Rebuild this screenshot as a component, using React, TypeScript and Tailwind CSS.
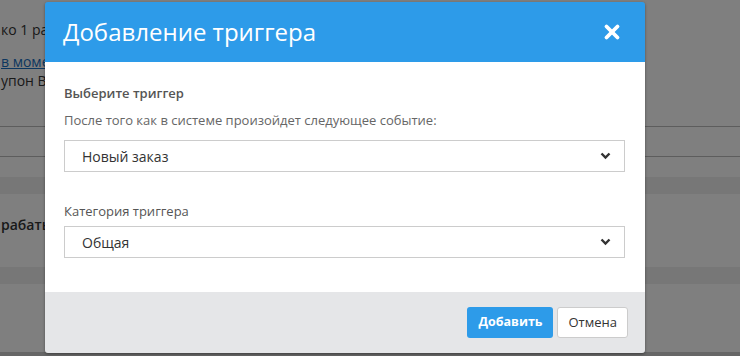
import { X } from 'lucide-react'

function Chevron() {
  return (
    <svg width="11" height="8" viewBox="0 0 11 8" className="text-[#333]">
      <path d="M1.5 1.5 L5.5 5.5 L9.5 1.5" fill="none" stroke="currentColor" strokeWidth="2.4" />
    </svg>
  )
}

function Select({ value }: { value: string }) {
  return (
    <div className="flex h-8 items-center justify-between border border-[#cccccc] bg-white pl-[17px] pr-[13px] text-[14px] text-[#333]">
      <span>{value}</span>
      <Chevron />
    </div>
  )
}

export default function App() {
  return (
    <div
      className="relative h-[356px] w-[740px] overflow-hidden bg-white text-[#333]"
      style={{ fontFamily: '"Open Sans", "Noto Sans", sans-serif' }}
    >
      {/* page behind the modal */}
      <div className="text-[14px] leading-[19px]">
        <div className="pt-[20px] pl-[1px]">ко 1 раз</div>
        <div className="pt-[13px] pl-[1px] text-[#1a6fc0] underline">в моменты</div>
        <div className="pl-[1px]">упон Выбран</div>
        <div className="mt-[36px] border-b border-[#bbb]" />
        <div className="mt-[29px] border-b border-[#bbb]" />
        <div className="mt-[20px] h-[17px] bg-[#eeeeee]" />
        <div className="h-[73px] pt-[21px] pl-[1px] font-semibold">рабать</div>
        <div className="h-[17px] bg-[#eeeeee]" />
        <div className="h-[68px]" />
        <div className="h-[4px] bg-[#ccc]" />
      </div>

      {/* overlay */}
      <div className="absolute inset-0 bg-black/50" />

      {/* modal */}
      <div className="absolute left-[45px] top-[2px] w-[600px] overflow-hidden rounded-[3px] shadow-[0_1px_3px_rgba(0,0,0,0.4)]">
        <div className="flex h-[60px] items-center justify-between bg-[#2d9be9] pl-[18px] pr-[22px]">
          <h2 className="text-[24px] text-white">Добавление триггера</h2>
          <X className="h-[22px] w-[22px] text-white" strokeWidth={4.2} />
        </div>
        <div className="bg-white pl-[19px] pr-[20px] pt-[22px] pb-[34px]">
          <div className="text-[13px] font-semibold leading-[18px] text-[#555]">Выберите триггер</div>
          <div className="mt-[9px] text-[13px] leading-[18px] text-[#666]">
            После того как в системе произойдет следующее событие:
          </div>
          <div className="mt-[11px]">
            <Select value="Новый заказ" />
          </div>
          <div className="mt-[30px] text-[13px] font-medium leading-[18px] text-[#555]">Категория триггера</div>
          <div className="mt-[6px]">
            <Select value="Общая" />
          </div>
        </div>
        <div className="flex h-[61px] items-center justify-end gap-[4px] bg-[#e5e6e8] pr-[17px]">
          <button className="h-[31px] rounded-[3px] bg-[#2d9be9] px-[11px] text-[12.5px] font-bold text-white">
            Добавить
          </button>
          <button className="h-[31px] rounded-[3px] border border-[#cccccc] bg-white px-[10px] text-[13px] text-[#333]">
            Отмена
          </button>
        </div>
      </div>
    </div>
  )
}
